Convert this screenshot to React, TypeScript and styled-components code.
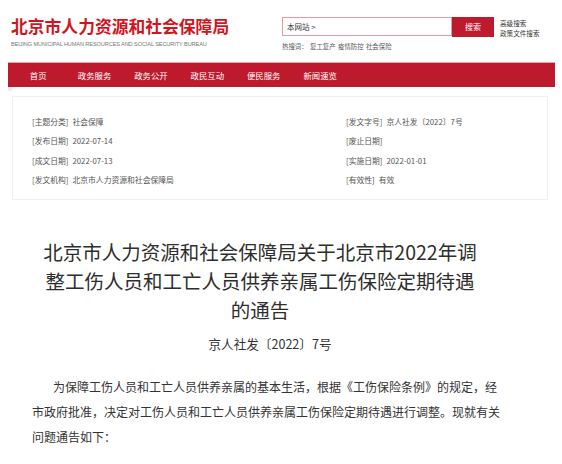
import React from 'react';
import styled, { createGlobalStyle } from 'styled-components';

const GlobalStyle = createGlobalStyle`
  body {
    margin: 0;
    background: #fff;
    font-family: "Noto Sans CJK SC", "Liberation Sans", sans-serif;
    color: #333;
  }
`;

const Page = styled.div`
  width: 562px;
  overflow: hidden;
`;

const Header = styled.div`
  display: flex;
  align-items: flex-start;
  height: 62px;
  padding-left: 11px;
  box-sizing: border-box;
`;

const Logo = styled.div`
  width: 271px;
  padding-top: 16px;
`;

const LogoName = styled.div`
  font-size: 16.8px;
  line-height: 20px;
  font-weight: 700;
  color: #d3141f;
  white-space: nowrap;
`;

const LogoEn = styled.div`
  margin-top: 5px;
  font-family: "Liberation Sans", sans-serif;
  font-size: 5.6px;
  line-height: 7px;
  color: #777;
  white-space: nowrap;
  letter-spacing: -0.1px;
`;

const SearchArea = styled.div`
  padding-top: 17px;
`;

const SearchRow = styled.div`
  display: flex;
  align-items: flex-start;
`;

const SearchBox = styled.div`
  width: 170px;
  height: 19px;
  box-sizing: border-box;
  border: 1px solid #e49aa3;
  font-size: 7.5px;
  line-height: 17px;
  padding-left: 4px;
  color: #333;
`;

const SearchButton = styled.div`
  width: 42px;
  height: 20px;
  background: #be1a2d;
  color: #fff;
  font-size: 8px;
  line-height: 20px;
  text-align: center;
`;

const Links = styled.div`
  margin-left: 6px;
  margin-top: 1px;
  display: flex;
  flex-direction: column;
  font-size: 6.6px;
  line-height: 10px;
  color: #333;
`;

const HotWords = styled.div`
  margin-top: 5px;
  font-size: 6.4px;
  line-height: 8px;
  color: #555;
  word-spacing: 1px;
`;

const Nav = styled.div`
  margin-left: 8px;
  width: 547px;
  height: 25px;
  background: #be1a2d;
  border-top: 1px solid #e7a6ad;
  box-sizing: border-box;
  display: flex;
  padding-left: 2px;
`;

const NavItem = styled.div`
  width: 56.4px;
  text-align: center;
  color: #fff;
  font-size: 8.4px;
  line-height: 24px;
  white-space: nowrap;
`;

const Corner = styled.div`
  margin-left: 8px;
  width: 4px;
  height: 4px;
  background: #eeeeee;
`;

const InfoBox = styled.div`
  margin: 5px 0 0 12px;
  width: 536px;
  box-sizing: border-box;
  border: 1px solid #efefef;
  padding: 15px 0 10px 19px;
  display: grid;
  grid-template-columns: 314px 1fr;
  grid-auto-rows: 19.3px;
  font-size: 7.8px;
  color: #555;
`;

const InfoCell = styled.div`
  display: flex;
  align-items: center;
  white-space: nowrap;
`;

const Label = styled.span`
  margin-right: 4px;
`;

const Title = styled.h1`
  margin: 37px 0 0 40px;
  width: 440px;
  font-size: 19.5px;
  line-height: 29px;
  font-weight: 400;
  text-align: center;
  color: #2e2e2e;
`;

const DocNo = styled.div`
  margin-top: 10px;
  padding-right: 22px;
  text-align: center;
  font-size: 12.6px;
  line-height: 20px;
  color: #333;
`;

const Body = styled.p`
  margin: 20px 0 0 32px;
  width: 470px;
  font-size: 12px;
  line-height: 25px;
  text-indent: 21px;
  color: #333;
`;

const navItems = ['首页', '政务服务', '政务公开', '政民互动', '便民服务', '新闻速览'];

const info = [
  ['[主题分类]', '社会保障', '[发文字号]', '京人社发〔2022〕7号'],
  ['[发布日期]', '2022-07-14', '[废止日期]', ''],
  ['[成文日期]', '2022-07-13', '[实施日期]', '2022-01-01'],
  ['[发文机构]', '北京市人力资源和社会保障局', '[有效性]', '有效'],
];

export default function App() {
  return (
    <Page>
      <GlobalStyle />
      <Header>
        <Logo>
          <LogoName>北京市人力资源和社会保障局</LogoName>
          <LogoEn>BEIJING MUNICIPAL HUMAN RESOURCES AND SOCIAL SECURITY BUREAU</LogoEn>
        </Logo>
        <SearchArea>
          <SearchRow>
            <SearchBox>本网站 &gt;</SearchBox>
            <SearchButton>搜索</SearchButton>
            <Links>
              <span>高级搜索</span>
              <span>政策文件搜索</span>
            </Links>
          </SearchRow>
          <HotWords>热搜词： 复工复产 疫情防控 社会保险</HotWords>
        </SearchArea>
      </Header>
      <Nav>
        {navItems.map((item) => (
          <NavItem key={item}>{item}</NavItem>
        ))}
      </Nav>
      <Corner />
      <InfoBox>
        {info.map((row) => (
          <React.Fragment key={row[0]}>
            <InfoCell>
              <Label>{row[0]}</Label>
              {row[1]}
            </InfoCell>
            <InfoCell>
              <Label>{row[2]}</Label>
              {row[3]}
            </InfoCell>
          </React.Fragment>
        ))}
      </InfoBox>
      <Title>北京市人力资源和社会保障局关于北京市2022年调整工伤人员和工亡人员供养亲属工伤保险定期待遇的通告</Title>
      <DocNo>京人社发〔2022〕7号</DocNo>
      <Body>
        为保障工伤人员和工亡人员供养亲属的基本生活，根据《工伤保险条例》的规定，经市政府批准，决定对工伤人员和工亡人员供养亲属工伤保险定期待遇进行调整。现就有关问题通告如下：
      </Body>
    </Page>
  );
}
